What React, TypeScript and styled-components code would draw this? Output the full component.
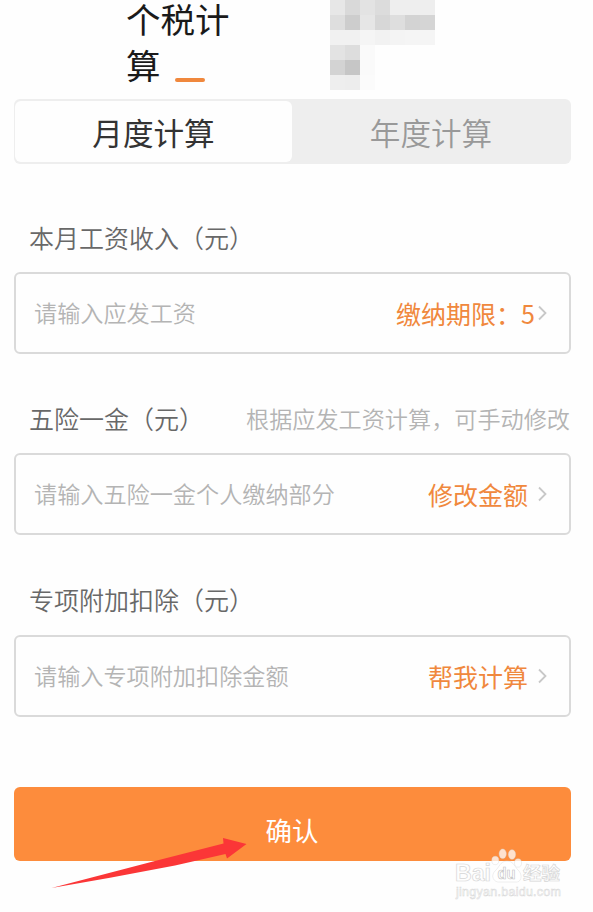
import { FC } from "react";
import styled, { createGlobalStyle } from "styled-components";

const colors = {
  accent: "#f0883d",
  button: "#fd8c3c",
  title: "#1a1a1a",
  label: "#686868",
  placeholder: "#b4b4b4",
  border: "#dadada",
  track: "#eeeeee",
  arrow: "#fb3637",
};

const GlobalStyle = createGlobalStyle`
  * {
    box-sizing: border-box;
  }
  body {
    margin: 0;
    background-color: #fefefe;
    font-family: "Noto Sans CJK SC", sans-serif;
  }
`;

const Page = styled.main`
  position: relative;
  width: 593px;
  height: 912px;
  padding: 0 22px 0 14px;
  overflow: hidden;
`;

const Header = styled.header`
  display: flex;
  height: 99px;
  padding-left: 112px;
`;

const Title = styled.h1`
  width: 204px;
  margin: -5px 0 0;
  padding-right: 96px;
  color: ${colors.title};
  font-size: 34.5px;
  font-weight: 400;
  line-height: 46px;
`;

const TitleMark = styled.span`
  display: inline-block;
  width: 30px;
  height: 4px;
  margin-left: 14px;
  border-radius: 2px;
  background-color: ${colors.accent};
  vertical-align: -3px;
`;

const Mosaic = styled.div`
  display: grid;
  grid-template-columns: repeat(7, 15px);
  grid-auto-rows: 15px;
`;

const Tile = styled.span<{ $shade: string }>`
  background-color: ${(props) => props.$shade};
`;

const Tabs = styled.div`
  display: grid;
  grid-template-columns: 277px 1fr;
  height: 65px;
  padding: 2px 1px;
  border-radius: 6px;
  background-color: ${colors.track};
`;

const Tab = styled.button<{ $isActive?: boolean }>`
  padding: 0;
  border: 0;
  border-radius: 6px;
  background-color: ${(props) => (props.$isActive ? "#fefefe" : "transparent")};
  color: ${(props) => (props.$isActive ? "#333" : "#999")};
  font-family: inherit;
  font-size: 30.6px;
  font-weight: ${(props) => (props.$isActive ? 400 : 350)};
`;

const Field = styled.section`
  height: 181.4px;
`;

const Form = styled.form`
  padding-top: 52px;
`;

const FieldHeader = styled.div`
  display: flex;
  align-items: center;
  justify-content: space-between;
  height: 56px;
  padding: 0 1px 15px 15px;
  white-space: nowrap;
`;

const Label = styled.label`
  color: ${colors.label};
  font-size: 25px;
  font-weight: 350;
  line-height: 36px;
`;

const Hint = styled.span`
  color: ${colors.placeholder};
  font-size: 23.15px;
  font-weight: 350;
  line-height: 36px;
`;

const Box = styled.div`
  display: flex;
  align-items: center;
  height: 82px;
  padding: 0 22px 0 18px;
  border: 2px solid ${colors.border};
  border-radius: 6px;
`;

const Placeholder = styled.span`
  flex: 1;
  padding-bottom: 2px;
  color: ${colors.placeholder};
  font-size: 23.15px;
  font-weight: 350;
`;

const Action = styled.span<{ $gap: number }>`
  display: flex;
  align-items: center;
  gap: ${(props) => props.$gap}px;
  color: ${colors.accent};
  font-size: 25px;
`;

const Confirm = styled.button`
  display: block;
  width: 557px;
  height: 74px;
  margin-top: 27px;
  padding: 12px 1px 0 0;
  border: 0;
  border-radius: 6px;
  background-color: ${colors.button};
  color: #fff;
  font-family: inherit;
  font-size: 26.5px;
  line-height: 62px;
`;

const Pointer = styled.svg`
  position: absolute;
  left: 50px;
  top: 836px;
`;

const Watermark = styled.svg`
  position: absolute;
  left: 450px;
  top: 844px;
`;

const tiles = [
  ["#e7e7e7", "#d9d9d9", "#e3e3e3", "#dcdcdc", "#eeeeee", "#eeeeee", "#eeeeee"],
  ["#dedede", "#cdcdcd", "#e6e6e6", "#d7d7d7", "#dedede", "#d3d3d3", "#d5d5d5"],
  ["#f1f1f1", "#f1f1f1", "#f5f5f5", "#f2f2f2", "#f4f4f4", "#f5f5f5", "#f5f5f5"],
  ["#e3e3e3", "#dddddd", "#fafafa", "#fefefe", "#fefefe", "#fefefe", "#fefefe"],
  ["#d3d3d3", "#c6c6c6", "#fafafa", "#fefefe", "#fefefe", "#fefefe", "#fefefe"],
  ["#eeeeee", "#ededed", "#fbfbfb", "#fefefe", "#fefefe", "#fefefe", "#fefefe"],
];

const fields = [
  {
    label: "本月工资收入（元）",
    placeholder: "请输入应发工资",
    action: "缴纳期限：5",
    gap: 3,
  },
  {
    label: "五险一金（元）",
    hint: "根据应发工资计算，可手动修改",
    placeholder: "请输入五险一金个人缴纳部分",
    action: "修改金额",
    gap: 10,
  },
  {
    label: "专项附加扣除（元）",
    placeholder: "请输入专项附加扣除金额",
    action: "帮我计算",
    gap: 10,
  },
];

const Chevron: FC = () => (
  <svg width="9" height="16" viewBox="0 0 9 16" fill="none">
    <path d="M1 1.5 7.5 8 1 14.5" stroke="#c8c8c8" strokeWidth="1.8" />
  </svg>
);

const App: FC = () => {
  return (
    <Page>
      <GlobalStyle />
      <Header>
        <Title>
          个税计算
          <TitleMark />
        </Title>
        <Mosaic>
          {tiles.flat().map((shade, index) => (
            <Tile key={index} $shade={shade} />
          ))}
        </Mosaic>
      </Header>
      <Tabs>
        <Tab $isActive>月度计算</Tab>
        <Tab>年度计算</Tab>
      </Tabs>
      <Form>
        {fields.map((field) => (
          <Field key={field.label}>
            <FieldHeader>
              <Label>{field.label}</Label>
              {field.hint && <Hint>{field.hint}</Hint>}
            </FieldHeader>
            <Box>
              <Placeholder>{field.placeholder}</Placeholder>
              <Action $gap={field.gap}>
                {field.action}
                <Chevron />
              </Action>
            </Box>
          </Field>
        ))}
        <Confirm type="button">确认</Confirm>
      </Form>
      <Pointer width="200" height="56" viewBox="0 0 200 56">
        <path
          d="M1.5 52 103 25.5 173.5 7.5 173 2 196.5 8 177 22.5 175.5 18 125 29.5 60 41.8Z"
          fill={colors.arrow}
        />
      </Pointer>
      <Watermark width="143" height="58" viewBox="0 0 143 58">
        <g
          fill="#fff"
          fillOpacity="0.75"
          stroke="#d6d6d6"
          strokeWidth="0.7"
          fontFamily="Liberation Sans, Noto Sans CJK SC, sans-serif"
        >
          <text
            x="5"
            y="36.5"
            fontSize="23.5"
            fontWeight="700"
            textLength="36"
            lengthAdjust="spacingAndGlyphs"
          >
            Bai
          </text>
          <g strokeWidth="0.4">
            <ellipse cx="45.3" cy="16.5" rx="3.5" ry="4.2" />
            <ellipse cx="52.7" cy="9.8" rx="3.6" ry="4.8" />
            <ellipse cx="62" cy="10.5" rx="3.6" ry="4.8" />
            <ellipse cx="68" cy="19" rx="3.5" ry="4.2" />
            <path d="M57 17C50 17 49 24 45 27C40 32 44 39 50 38H65C71 39 73 32 69 27C65 24 64 17 57 17Z" />
          </g>
          <text
            x="47.5"
            y="35"
            fontSize="17"
            fontWeight="700"
            stroke="#c4c4c4"
            textLength="18"
            lengthAdjust="spacingAndGlyphs"
          >
            du
          </text>
          <text x="73" y="36" fontSize="18.5" fontWeight="700">
            经验
          </text>
          <text x="6" y="51.5" fontSize="12.5" strokeWidth="0.5" textLength="105">
            jingyan.baidu.com
          </text>
        </g>
      </Watermark>
    </Page>
  );
};

export default App;
